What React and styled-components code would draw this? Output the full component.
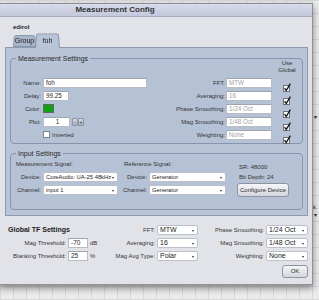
import React from "react";
import styled, { createGlobalStyle } from "styled-components";

const GlobalStyle = createGlobalStyle`
  html, body {
    margin: 0;
    padding: 0;
  }
  body {
    width: 319px;
    height: 300px;
    overflow: hidden;
    font-family: "Liberation Sans", Arial, sans-serif;
    color: #2c2c2c;
  }
`;

const PANEL = "#b8c4d7";

const Desktop = styled.div`
  position: relative;
  width: 319px;
  height: 300px;
  overflow: hidden;
  background-color: #ebebeb;
  background-image: linear-gradient(#d8d8d8 1px, transparent 1px),
    linear-gradient(90deg, #d8d8d8 1px, transparent 1px);
  background-size: 13px 13px;
`;

const EdgeGlyph = styled.span`
  position: absolute;
  left: ${(p) => p.$x}px;
  top: ${(p) => p.$y}px;
  font-size: 6px;
  color: #333;
`;

const Window = styled.div`
  position: absolute;
  left: -1px;
  top: 3px;
  width: 314px;
  height: 282px;
  box-sizing: border-box;
  background: #e2e3e9;
  border: 1px solid #8d9099;
  box-shadow: 0 3px 7px rgba(0, 0, 0, 0.45);
  display: flex;
  flex-direction: column;
`;

const TitleBar = styled.div`
  height: 13px;
  box-sizing: border-box;
  background: linear-gradient(#d8dbea, #c3c8dc);
  border-bottom: 1px solid #a7acbd;
  padding-right: 82px;
  text-align: center;
  font-size: 8px;
  font-weight: bold;
  line-height: 12px;
  color: #333;
`;

const Body = styled.div`
  display: flex;
  flex-direction: column;
  padding: 0 4px 0 5px;
`;

const DeviceName = styled.div`
  margin-top: 5px;
  padding-left: 8px;
  height: 10px;
  font-size: 6px;
  font-weight: bold;
  line-height: 10px;
  color: #222;
`;

const TabRow = styled.div`
  display: flex;
  align-items: flex-end;
  height: 16px;
  padding-left: 8px;
  margin-bottom: -1px;
  position: relative;
  z-index: 2;
`;

const Tab = styled.div`
  position: relative;
  z-index: ${(p) => (p.$active ? 2 : 1)};
  width: ${(p) => p.$w}px;
  height: ${(p) => (p.$active ? 16 : 13)}px;
  margin-bottom: ${(p) => (p.$active ? 0 : 1)}px;
  margin-left: ${(p) => (p.$active ? -1 : 0)}px;
  display: flex;
  align-items: center;
  justify-content: center;
  font-size: 7px;
  color: #222;

  &::before {
    content: "";
    position: absolute;
    inset: 0;
    z-index: -1;
    box-sizing: border-box;
    background: ${(p) => (p.$active ? PANEL : "#a9b5c9")};
    border: 1px solid #8794aa;
    border-bottom: ${(p) => (p.$active ? "none" : "1px solid #8794aa")};
    border-radius: 3px 3px 0 0;
    transform: perspective(14px) rotateX(5deg);
    transform-origin: bottom;
  }
`;

const Panel = styled.div`
  background: ${PANEL};
  border: 1px solid #8f9aad;
  padding: 10px 4px 5px 4px;
  display: flex;
  flex-direction: column;
  gap: 9px;
`;

const GroupBox = styled.div`
  position: relative;
  height: ${(p) => p.$h}px;
  box-sizing: border-box;
  border: 1px solid #8794ab;
  border-radius: 4px;
  background: #b5c2d5;
`;

const Legend = styled.span`
  position: absolute;
  top: -5px;
  left: 5px;
  padding: 0 2px;
  background: ${PANEL};
  font-size: 7px;
  line-height: 9px;
  color: #2a2a2a;
`;

const MeasureGrid = styled.div`
  display: grid;
  grid-template-columns: 32px 104px 1fr 46px 19px;
  grid-template-rows: 17px repeat(5, 13px);
  padding-right: 11px;
  align-items: center;
`;

const InputGrid = styled.div`
  display: grid;
  grid-template-columns: 32px 75px 31px 77px 1fr;
  grid-template-rows: 12px 13px 13px;
  padding-top: 4px;
  align-items: center;
`;

const Label = styled.span`
  font-size: 6px;
  color: #333;
  text-align: right;
  padding-right: ${(p) => p.$pr ?? 2}px;
  white-space: nowrap;
  grid-column: ${(p) => p.$col || "auto"};
  grid-row: ${(p) => p.$row || "auto"};
`;

const Caption = styled.span`
  font-size: 6px;
  color: #333;
  padding-left: ${(p) => p.$pl}px;
  white-space: nowrap;
  grid-column: ${(p) => p.$col};
  grid-row: ${(p) => p.$row};
`;

const UseGlobal = styled.div`
  grid-column: 5;
  grid-row: 1;
  justify-self: end;
  align-self: start;
  width: 20px;
  margin-right: -6px;
  padding-top: 1px;
  text-align: center;
  font-size: 6px;
  line-height: 7px;
  color: #333;
`;

const Field = styled.div`
  width: ${(p) => p.$w}px;
  height: 10px;
  box-sizing: border-box;
  background: #fff;
  border: 1px solid #b7bbc6;
  border-top-color: #9ea3b0;
  padding-left: 2px;
  font-size: ${(p) => p.$fs || 6.3}px;
  line-height: 8px;
  color: ${(p) => (p.$muted ? "#a3a3a3" : "#2a2a2a")};
  text-align: ${(p) => (p.$center ? "center" : "left")};
  white-space: nowrap;
  overflow: hidden;
`;

const Swatch = styled.div`
  width: 11px;
  height: 9px;
  box-sizing: border-box;
  background: #12a012;
  border: 1px solid #5d6a5d;
`;

const SpinWrap = styled.div`
  display: flex;
  align-items: center;
  gap: 1px;
`;

const Stepper = styled.div`
  display: flex;
  margin-left: 1px;
`;

const StepButton = styled.div`
  width: 6px;
  height: 8px;
  box-sizing: border-box;
  background: linear-gradient(#d6dae2, #a9b0bd);
  border: 1px solid #8d95a4;
  border-radius: 1px;
  font-size: 5px;
  line-height: 6px;
  text-align: center;
  color: #333;
`;

const CheckRow = styled.div`
  display: flex;
  align-items: center;
  gap: 2px;
  font-size: 6px;
  color: #333;
`;

const Box = styled.div`
  width: 7px;
  height: 7px;
  box-sizing: border-box;
  background: #fff;
  border: 1px solid #7d828d;
`;

const CheckCell = styled.div`
  margin-left: 11px;
  width: 8px;
  height: 9px;
`;

const Select = styled.div`
  position: relative;
  width: ${(p) => p.$w}px;
  height: 10px;
  box-sizing: border-box;
  background: #fff;
  border: 1px solid #bcc0ca;
  border-radius: 2px;
  padding-left: 2px;
  font-size: ${(p) => p.$fs || 5.8}px;
  line-height: 8px;
  color: #222;
  white-space: nowrap;
  overflow: hidden;

  &::after {
    content: "";
    position: absolute;
    right: 3px;
    top: 4px;
    border-left: 1.5px solid transparent;
    border-right: 1.5px solid transparent;
    border-top: 2px solid #333;
  }
`;

const DeviceInfo = styled.div`
  grid-column: 5;
  grid-row: 1 / span 3;
  align-self: start;
  display: flex;
  flex-direction: column;
  align-items: flex-start;
  padding-top: 4px;
  padding-left: 13px;
  font-size: 6px;
  line-height: 10px;
  color: #333;
`;

const PushButton = styled.div`
  width: ${(p) => p.$w}px;
  height: ${(p) => p.$h}px;
  margin: ${(p) => p.$m || 0};
  box-sizing: border-box;
  background: linear-gradient(#f6f6f8, #d3d6de);
  border: 1px solid #8f94a0;
  border-radius: 3px;
  font-size: 6px;
  line-height: ${(p) => p.$h - 2}px;
  text-align: center;
  color: #2a2a2a;
  white-space: nowrap;
`;

const GlobalGrid = styled.div`
  margin-top: 7px;
  display: grid;
  grid-template-columns: 62px 21px 16px 53px 41px 68px 42px;
  grid-template-rows: repeat(3, 13px);
  align-items: center;
`;

const SectionTitle = styled.span`
  grid-column: 1 / span 3;
  grid-row: 1;
  padding-left: 3px;
  font-size: 7px;
  font-weight: bold;
  color: #222;
`;

const Cell = styled.div`
  grid-column: ${(p) => p.$col};
  grid-row: ${(p) => p.$row};
  padding-left: ${(p) => p.$pl || 0}px;
  font-size: 6px;
  color: #333;
`;

const Footer = styled.div`
  display: flex;
  justify-content: flex-end;
  margin-top: 3px;
`;

function Check() {
  return (
    <svg width="8" height="9" viewBox="0 0 8 9">
      <rect x="0.5" y="2.5" width="6" height="6" fill="#fff" stroke="#6d717b" />
      <path
        d="M1.6 5.2 L3.2 7.6 L7.4 0.6"
        fill="none"
        stroke="#111"
        strokeWidth="1.3"
      />
    </svg>
  );
}

const measureRows = [
  ["FFT:", "MTW"],
  ["Averaging:", "16"],
  ["Phase Smoothing:", "1/24 Oct"],
  ["Mag Smoothing:", "1/48 Oct"],
  ["Weighting:", "None"],
];

export default function App() {
  return (
    <>
      <GlobalStyle />
      <Desktop>
        <EdgeGlyph $x={314} $y={113}>▾</EdgeGlyph>
        <EdgeGlyph $x={313} $y={204}>k</EdgeGlyph>
        <EdgeGlyph $x={314} $y={211}>▾</EdgeGlyph>
        <Window>
          <TitleBar>Measurement Config</TitleBar>
          <Body>
            <DeviceName>edirol</DeviceName>
            <TabRow>
              <Tab $w={23}>Group</Tab>
              <Tab $w={25} $active>
                foh
              </Tab>
            </TabRow>
            <Panel>
              <GroupBox $h={86}>
                <Legend>Measurement Settings</Legend>
                <MeasureGrid>
                  <UseGlobal>
                    Use
                    <br />
                    Global
                  </UseGlobal>

                  <Label $col={1} $row={2}>Name:</Label>
                  <Field $w={104} style={{ gridColumn: 2, gridRow: 2 }}>
                    foh
                  </Field>
                  <Label $col={1} $row={3}>Delay:</Label>
                  <Field $w={26} style={{ gridColumn: 2, gridRow: 3 }}>
                    99.25
                  </Field>
                  <Label $col={1} $row={4}>Color:</Label>
                  <div style={{ gridColumn: 2, gridRow: 4 }}>
                    <Swatch />
                  </div>
                  <Label $col={1} $row={5}>Plot:</Label>
                  <SpinWrap style={{ gridColumn: 2, gridRow: 5 }}>
                    <Field $w={27} $center>
                      1
                    </Field>
                    <Stepper>
                      <StepButton>-</StepButton>
                      <StepButton>+</StepButton>
                    </Stepper>
                  </SpinWrap>
                  <CheckRow style={{ gridColumn: 2, gridRow: 6 }}>
                    <Box />
                    Inverted
                  </CheckRow>

                  {measureRows.map(([label, value], i) => (
                    <React.Fragment key={label}>
                      <Label $col={3} $row={i + 2} $pr={1}>
                        {label}
                      </Label>
                      <Field $w={46} $muted style={{ gridColumn: 4, gridRow: i + 2 }}>
                        {value}
                      </Field>
                      <CheckCell style={{ gridColumn: 5, gridRow: i + 2 }}>
                        <Check />
                      </CheckCell>
                    </React.Fragment>
                  ))}
                </MeasureGrid>
              </GroupBox>

              <GroupBox $h={57}>
                <Legend>Input Settings</Legend>
                <InputGrid>
                  <Caption $col="1 / span 2" $row={1} $pl={5}>
                    Measurement Signal:
                  </Caption>
                  <Label $col={1} $row={2}>Device:</Label>
                  <Select $w={75} style={{ gridColumn: 2, gridRow: 2 }}>
                    CoreAudio: UA-25 48kHz
                  </Select>
                  <Label $col={1} $row={3}>Channel:</Label>
                  <Select $w={75} style={{ gridColumn: 2, gridRow: 3 }}>
                    input 1
                  </Select>

                  <Caption $col="3 / span 2" $row={1} $pl={6}>
                    Reference Signal:
                  </Caption>
                  <Label $col={3} $row={2}>Device:</Label>
                  <Select $w={77} style={{ gridColumn: 4, gridRow: 2 }}>
                    Generator
                  </Select>
                  <Label $col={3} $row={3}>Channel:</Label>
                  <Select $w={77} style={{ gridColumn: 4, gridRow: 3 }}>
                    Generator
                  </Select>

                  <DeviceInfo>
                    <span>SR: 48000</span>
                    <span>Bit Depth: 24</span>
                    <PushButton $w={52} $h={14} $m="1px 0 0 -2px">
                      Configure Device
                    </PushButton>
                  </DeviceInfo>
                </InputGrid>
              </GroupBox>
            </Panel>

            <GlobalGrid>
              <SectionTitle>Global TF Settings</SectionTitle>
              <Label $col={1} $row={2} $pr={1}>Mag Threshold:</Label>
              <Cell $col={2} $row={2} $pl={1}>
                <Field $w={20} $fs={6.5}>-70</Field>
              </Cell>
              <Cell $col={3} $row={2} $pl={2}>dB</Cell>
              <Label $col={1} $row={3} $pr={1}>Blanking Threshold:</Label>
              <Cell $col={2} $row={3} $pl={1}>
                <Field $w={20} $fs={6.5}>25</Field>
              </Cell>
              <Cell $col={3} $row={3} $pl={2}>%</Cell>

              <Label $col={4} $row={1}>FFT:</Label>
              <Select $w={41} $fs={7} style={{ gridColumn: 5, gridRow: 1 }}>
                MTW
              </Select>
              <Label $col={4} $row={2}>Averaging:</Label>
              <Select $w={41} $fs={7} style={{ gridColumn: 5, gridRow: 2 }}>
                16
              </Select>
              <Label $col={4} $row={3}>Mag Avg Type:</Label>
              <Select $w={41} $fs={7} style={{ gridColumn: 5, gridRow: 3 }}>
                Polar
              </Select>

              <Label $col={6} $row={1}>Phase Smoothing:</Label>
              <Select $w={42} $fs={7} style={{ gridColumn: 7, gridRow: 1 }}>
                1/24 Oct
              </Select>
              <Label $col={6} $row={2}>Mag Smoothing:</Label>
              <Select $w={42} $fs={7} style={{ gridColumn: 7, gridRow: 2 }}>
                1/48 Oct
              </Select>
              <Label $col={6} $row={3}>Weighting:</Label>
              <Select $w={42} $fs={7} style={{ gridColumn: 7, gridRow: 3 }}>
                None
              </Select>
            </GlobalGrid>

            <Footer>
              <PushButton $w={26} $h={13}>
                OK
              </PushButton>
            </Footer>
          </Body>
        </Window>
      </Desktop>
    </>
  );
}
